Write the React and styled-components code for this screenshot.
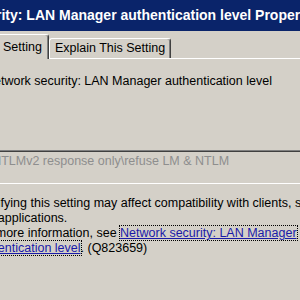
import React from "react";
import { styled, createGlobalStyle } from "styled-components";

/***********************Styles*************************/
//variables
const face = "#d4d0c8";
const shadow = "#808080";
const darkShadow = "#404040";
const highlight = "#ffffff";
const caption = "#0a246a";
//variables

const GlobalStyle = createGlobalStyle`
  html, body {
    margin: 0;
    padding: 0;
    background: ${face};
    overflow: hidden;
  }
  body {
    font-family: "Liberation Sans", Arial, sans-serif;
    font-size: 12.5px;
    color: #000;
  }
`;

// the dialog is wider than the window and starts left of it
const Dialog = styled.div`
  width: 520px;
  height: 300px;
  margin-left: -110px;
  background: ${face};
  overflow: hidden;
`;

const TitleBar = styled.div`
  height: 31px;
  padding-left: 15px;
  background: ${caption};
  color: #fff;
  font-weight: bold;
  font-size: 14px;
  line-height: 31px;
  white-space: nowrap;
`;

const TabStrip = styled.div`
  display: flex;
  align-items: flex-end;
  margin-top: 3px;
  padding-left: 24px;
  position: relative;
  z-index: 1;
`;

const Tab = styled.div`
  box-sizing: border-box;
  height: ${(p) => (p.$active ? "25px" : "20px")};
  margin-bottom: ${(p) => (p.$active ? "-1px" : "0")};
  padding: 0 ${(p) => (p.$active ? "6px" : "5px")};
  line-height: ${(p) => (p.$active ? "24px" : "19px")};
  background: ${face};
  border-top: 1px solid ${highlight};
  border-left: 1px solid ${highlight};
  border-right: 1px solid ${darkShadow};
  border-radius: 3px 3px 0 0;
  box-shadow: inset -1px 0 ${shadow};
  white-space: nowrap;
`;

const Panel = styled.div`
  margin: 0 6px;
  height: 260px;
  border-top: 1px solid ${highlight};
  border-left: 1px solid ${highlight};
  border-right: 1px solid ${darkShadow};
  display: flex;
  flex-direction: column;
`;

const PolicyName = styled.div`
  margin: 15px 0 0 88px;
  line-height: 15px;
  white-space: nowrap;
`;

const Combo = styled.div`
  box-sizing: border-box;
  width: 390px;
  height: 34px;
  margin: 61px 0 0 57.5px;
  padding: 3px 0 0 4px;
  line-height: 15px;
  color: #8e8e8e;
  border: 1px solid;
  border-color: ${shadow} ${highlight} ${highlight} ${shadow};
  box-shadow: inset 1px 1px ${darkShadow}, inset -1px -1px ${face};
  white-space: nowrap;
`;

const Warning = styled.p`
  width: 385px;
  margin: 12px 0 0 76.5px;
  line-height: 15px;
`;

// focus rectangle drawn per line, like the classic dotted focus box
const Link = styled.a`
  color: #1a1aa8;
  text-decoration: underline;
  border: 1px dotted #000;
  margin: 0 -1px;
  -webkit-box-decoration-break: clone;
  box-decoration-break: clone;
`;

/***********************Component*************************/

const App = () => {
  return (
    <>
      <GlobalStyle />
      <Dialog>
        <TitleBar>Network security: LAN Manager authentication level Properties</TitleBar>
        <TabStrip>
          <Tab $active>Local Security Setting</Tab>
          <Tab>Explain This Setting</Tab>
        </TabStrip>
        <Panel>
          <PolicyName>Network security: LAN Manager authentication level</PolicyName>
          <Combo>Send NTLMv2 response only\refuse LM &amp; NTLM</Combo>
          <Warning>
            Modifying this setting may affect compatibility with clients, services, and applications.
            <br />
            For more information, see{" "}
            <Link href="#">Network security: LAN Manager authentication level</Link>. (Q823659)
          </Warning>
        </Panel>
      </Dialog>
    </>
  );
};

export default App;
